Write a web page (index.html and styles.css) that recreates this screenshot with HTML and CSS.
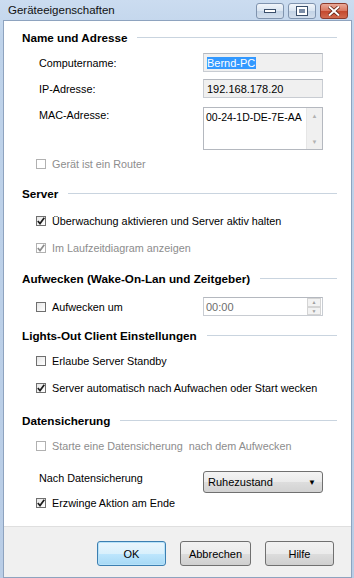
FILE: index.html
```html
<!DOCTYPE html>
<html lang="de">
<head>
    <meta charset="UTF-8">
    <meta name="viewport" content="width=device-width, initial-scale=1.0">
    <title>Geräteeigenschaften</title>
    <link rel="stylesheet" href="styles.css">
</head>
<body>
    <div class="window">
        <div class="titlebar">
            <span class="title">Geräteeigenschaften</span>
            <div class="caption-btns">
                <span class="cap"><svg width="12" height="6" viewBox="0 0 12 6"><rect x="0.5" y="1.5" width="11" height="3" fill="#fff" stroke="#3b4f6b"/></svg></span>
                <span class="cap"><svg width="12" height="10" viewBox="0 0 12 10"><rect x="0.5" y="0.5" width="11" height="9" fill="#fff" stroke="#3b4f6b"/><rect x="3" y="3" width="6" height="4" fill="#7c8ea8"/></svg></span>
                <span class="cap close"><svg width="12" height="10" viewBox="0 0 12 10"><path d="M1 0.5 L11 9.5 M11 0.5 L1 9.5" stroke="#5a1c10" stroke-width="3.4"/><path d="M1 0.5 L11 9.5 M11 0.5 L1 9.5" stroke="#fff" stroke-width="2"/></svg></span>
            </div>
        </div>

        <div class="client">
            <div class="content">
                <!-- Name und Adresse -->
                <div class="group-head mt-6"><span>Name und Adresse</span></div>
                <div class="row field mt-6">
                    <span class="label">Computername:</span>
                    <div class="input readonly"><span class="selected">Bernd-PC</span></div>
                </div>
                <div class="row field mt-7">
                    <span class="label">IP-Adresse:</span>
                    <div class="input readonly">192.168.178.20</div>
                </div>
                <div class="row field top mt-9">
                    <span class="label">MAC-Adresse:</span>
                    <div class="textarea">
                        <span class="ta-text">00-24-1D-DE-7E-AA</span>
                        <div class="scrollbar"><span>&#9650;</span><span>&#9660;</span></div>
                    </div>
                </div>
                <div class="row check-row disabled mt-5">
                    <span class="check"></span>Gerät ist ein Router
                </div>

                <!-- Server -->
                <div class="group-head mt-11"><span>Server</span></div>
                <div class="row check-row mt-9">
                    <span class="check checked"><svg width="8" height="8" viewBox="0 0 8 8"><path d="M0.8 4 L3 6.6 L7.3 0.8" fill="none" stroke="#1c1c1c" stroke-width="1.7"/></svg></span>Überwachung aktivieren und Server aktiv halten
                </div>
                <div class="row check-row disabled mt-10">
                    <span class="check checked"><svg width="8" height="8" viewBox="0 0 8 8"><path d="M0.8 4 L3 6.6 L7.3 0.8" fill="none" stroke="#8d8d8d" stroke-width="1.7"/></svg></span>Im Laufzeitdiagram anzeigen
                </div>

                <!-- Aufwecken -->
                <div class="group-head mt-12"><span>Aufwecken (Wake-On-Lan und Zeitgeber)</span></div>
                <div class="row field mt-9">
                    <span class="label check-label"><span class="check"></span>Aufwecken um</span>
                    <div class="input time">
                        <span class="time-text">00:00</span>
                        <div class="spinner"><span>&#9650;</span><span>&#9660;</span></div>
                    </div>
                </div>

                <!-- Lights-Out -->
                <div class="group-head mt-9"><span>Lights-Out Client Einstellungen</span></div>
                <div class="row check-row mt-7">
                    <span class="check"></span>Erlaube Server Standby
                </div>
                <div class="row check-row mt-10">
                    <span class="check checked"><svg width="8" height="8" viewBox="0 0 8 8"><path d="M0.8 4 L3 6.6 L7.3 0.8" fill="none" stroke="#1c1c1c" stroke-width="1.7"/></svg></span>Server automatisch nach Aufwachen oder Start wecken
                </div>

                <!-- Datensicherung -->
                <div class="group-head mt-14"><span>Datensicherung</span></div>
                <div class="row check-row disabled mt-7">
                    <span class="check"></span>Starte eine Datensicherung&nbsp; nach dem Aufwecken
                </div>
                <div class="row field top mt-16">
                    <span class="label">Nach Datensicherung</span>
                    <div class="select">Ruhezustand<span class="arrow">&#9660;</span></div>
                </div>
                <div class="row check-row mt-1">
                    <span class="check checked"><svg width="8" height="8" viewBox="0 0 8 8"><path d="M0.8 4 L3 6.6 L7.3 0.8" fill="none" stroke="#1c1c1c" stroke-width="1.7"/></svg></span>Erzwinge Aktion am Ende
                </div>
            </div>

            <div class="footer">
                <button class="btn default">OK</button>
                <button class="btn">Abbrechen</button>
                <button class="btn">Hilfe</button>
            </div>
        </div>
    </div>
</body>
</html>
```

FILE: styles.css
```css
body {
    margin: 0;
    font-family: "Liberation Sans", Arial, sans-serif;
    font-size: 10.8px;
    color: #000;
    background-color: #bcd0e8;
}

.window {
    width: 354px;
    height: 578px;
    box-sizing: border-box;
    padding: 0 2px 5px 3px;
    background: linear-gradient(to bottom, #cbdcf0, #bfd3ea 40px, #b9cde6);
}

.titlebar {
    height: 20px;
    display: flex;
    align-items: center;
    justify-content: space-between;
}

.title {
    font-size: 11.5px;
    padding-left: 5px;
    color: #111;
}

.caption-btns {
    display: flex;
    gap: 4px;
    margin-right: 4px;
    margin-top: 1px;
}

.cap {
    width: 28px;
    height: 16px;
    box-sizing: border-box;
    border: 1px solid #7f93ae;
    border-radius: 3px;
    background: linear-gradient(to bottom, #f1f5fa, #d9e4f1 50%, #c3d3e6 51%, #d2deec);
    display: flex;
    align-items: center;
    justify-content: center;
}

.cap.close {
    border-color: #8c3a2c;
    background: linear-gradient(to bottom, #e9a999, #d9765f 50%, #c4482d 51%, #d16a4f);
}

.client {
    height: 558px;
    box-sizing: border-box;
    border: 1px solid #8ea3bf;
    display: flex;
    flex-direction: column;
}

.content {
    background-color: #fff;
    padding: 0 14px 15px 18px;
}

.footer {
    flex: 1;
    background-color: #f0f0f0;
    border-top: 1px solid #dfdfdf;
    display: flex;
    justify-content: flex-end;
    align-items: flex-start;
    gap: 14px;
    padding: 14px 17px 0 0;
}

.mt-1 { margin-top: 1px; }
.mt-5 { margin-top: 5px; }
.mt-6 { margin-top: 6px; }
.mt-7 { margin-top: 7px; }
.mt-9 { margin-top: 9px; }
.mt-10 { margin-top: 10px; }
.mt-11 { margin-top: 11px; }
.mt-12 { margin-top: 12px; }
.mt-14 { margin-top: 14px; }
.mt-16 { margin-top: 16px; }

.group-head {
    height: 20px;
    display: flex;
    align-items: center;
    font-weight: bold;
    font-size: 11.7px;
}

.group-head::after {
    content: "";
    flex: 1;
    height: 1px;
    margin-left: 10px;
    background-color: #c9d4df;
}

.row {
    display: flex;
    align-items: center;
}

.row.top {
    align-items: flex-start;
}

.field {
    padding-left: 17px;
}

.label {
    width: 164px;
    line-height: 16px;
}

.check-label {
    display: flex;
    align-items: center;
    margin-left: -3px;
    width: 167px;
}

.check-row {
    height: 17px;
    padding-left: 14px;
}

.check-row.disabled {
    color: #8d8d8d;
}

.check {
    width: 10px;
    height: 10px;
    box-sizing: border-box;
    border: 1px solid #6f6f6f;
    background: linear-gradient(135deg, #e6e6e6, #fff);
    margin-right: 6px;
    display: inline-flex;
    align-items: center;
    justify-content: center;
    flex-shrink: 0;
}

.disabled .check {
    border-color: #b1b1b1;
    background: #fff;
}

.input {
    width: 120px;
    height: 19px;
    box-sizing: border-box;
    border: 1px solid #c8ccd2;
    border-top-color: #b4b8bf;
    padding: 0 3px;
    display: flex;
    align-items: center;
    font-size: 11px;
}

.input.readonly {
    background-color: #f0f0f0;
}

.selected {
    background-color: #3399ff;
    color: #fff;
    padding-right: 1px;
}

.textarea {
    width: 120px;
    height: 43px;
    box-sizing: border-box;
    border: 1px solid #b4b8bf;
    display: flex;
    justify-content: space-between;
    font-size: 10.5px;
    white-space: nowrap;
}

.ta-text {
    padding: 3px 0 0 2px;
}

.scrollbar {
    width: 15px;
    background-color: #f0f0f0;
    border-left: 1px solid #e6e6e6;
    display: flex;
    flex-direction: column;
    justify-content: space-between;
    align-items: center;
    font-size: 6px;
    color: #b2b2b2;
    padding: 5px 0 4px;
}

.input.time {
    padding: 0 0 0 2px;
    justify-content: space-between;
    background-color: #fff;
    color: #6d6d6d;
}

.spinner {
    width: 14px;
    height: 17px;
    margin-right: 1px;
    display: flex;
    flex-direction: column;
    font-size: 5px;
    color: #a0a0a0;
}

.spinner span {
    flex: 1;
    border: 1px solid #d4d4d4;
    background-color: #f2f2f2;
    display: flex;
    align-items: center;
    justify-content: center;
}

.select {
    width: 120px;
    height: 22px;
    margin-top: 1px;
    box-sizing: border-box;
    border: 1px solid #707070;
    border-radius: 3px;
    background: linear-gradient(to bottom, #f4f4f4, #eaeaea 50%, #dddddd 51%, #d2d2d2);
    display: flex;
    align-items: center;
    justify-content: space-between;
    padding: 0 6px 0 4px;
    font-size: 11px;
}

.select .arrow {
    font-size: 8px;
}

.btn {
    font-family: "Liberation Sans", Arial, sans-serif;
    font-size: 11px;
    color: #000;
    height: 25px;
    box-sizing: border-box;
    border: 1px solid #707070;
    border-radius: 3px;
    background: linear-gradient(to bottom, #f2f2f2, #ebebeb 50%, #dddddd 51%, #cfcfcf);
    padding: 0;
}

.btn:nth-child(1),
.btn:nth-child(3) {
    width: 69px;
}

.btn:nth-child(2) {
    width: 71px;
}

.btn.default {
    border-color: #3c7fb1;
    box-shadow: inset 0 0 0 1px #b7e2f9;
    background: linear-gradient(to bottom, #eaf6fd, #d9f0fc 50%, #bee6fd 51%, #a7d9f5);
}
```
